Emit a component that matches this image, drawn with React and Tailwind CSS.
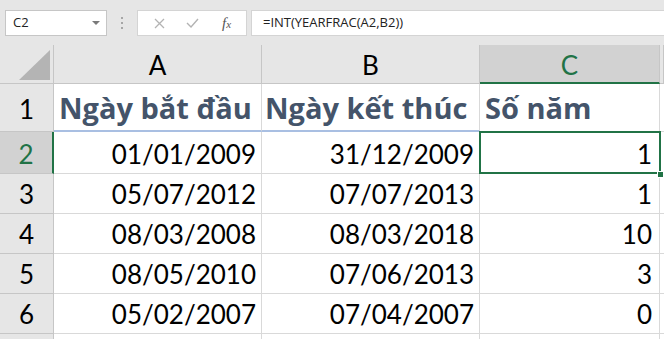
import React from "react";

const rows = [
  ["2", "01/01/2009", "31/12/2009", "1", "h-[42px]"],
  ["3", "05/07/2012", "07/07/2013", "1", "h-[40px]"],
  ["4", "08/03/2008", "08/03/2018", "10", "h-[40px]"],
  ["5", "08/05/2010", "07/06/2013", "3", "h-[40px]"],
  ["6", "05/02/2007", "07/04/2007", "0", "h-[40px]"],
  ["", "", "", "", "h-[40px]"],
];

function FormulaBar() {
  return (
    <div className="h-[45px] bg-[#e6e6e6] flex items-start pt-[10px] font-['Open_Sans',sans-serif] text-[13px]">
      {/* Name box */}
      <div className="ml-[5px] w-[102px] h-[26px] bg-white border border-[#c6c6c6] flex items-center justify-between pl-[7px] pr-[6px] text-[#222]">
        <span>C2</span>
        <svg width="8" height="5" viewBox="0 0 8 5">
          <path d="M0 0 L8 0 L4 4 Z" fill="#7a7a7a" />
        </svg>
      </div>

      {/* splitter dots */}
      <div className="w-[30px] h-[26px] flex flex-col items-center justify-center gap-[3px]">
        <span className="w-[2px] h-[2px] bg-[#a6a6a6]" />
        <span className="w-[2px] h-[2px] bg-[#a6a6a6]" />
        <span className="w-[2px] h-[2px] bg-[#a6a6a6]" />
      </div>

      {/* cancel / enter / fx */}
      <div className="w-[110px] h-[26px] bg-white border border-[#d4d4d4] flex items-center pl-[16px]">
        <svg width="11" height="11" viewBox="0 0 11 11">
          <path d="M1 1 L10 10 M10 1 L1 10" stroke="#b3b3b3" strokeWidth="1.3" />
        </svg>
        <svg className="ml-[21px]" width="13" height="10" viewBox="0 0 13 10">
          <path d="M1 5 L5 9 L12 1" stroke="#b3b3b3" strokeWidth="1.4" fill="none" />
        </svg>
        <span className="ml-[23px] font-['Liberation_Serif',serif] italic text-[#555] text-[15px] leading-none">
          f<span className="text-[11px]">x</span>
        </span>
      </div>

      {/* formula input */}
      <div className="ml-[4px] flex-1 h-[26px] bg-white border-t border-b border-l border-[#d4d4d4] flex items-center pl-[11px] text-[#222]">
        =INT(YEARFRAC(A2,B2))
      </div>
    </div>
  );
}

export default function App() {
  const head = "bg-[#e6e6e6] border-r border-b border-[#c6c6c6] flex items-end justify-center pb-[5px] leading-none";
  const cell = "bg-white border-r border-b border-[#d9d9d9] flex items-end justify-end pr-[5px] pb-[6px] leading-none";
  const title = "font-['Open_Sans',sans-serif] font-bold text-[29px] text-[#44546a] whitespace-nowrap";
  return (
    <div className="w-[664px] h-[339px] overflow-hidden bg-white font-['Lato',sans-serif] text-[26px] text-black">
      <FormulaBar />

      {/* column header row */}
      <div className="flex h-[39px]">
        <div className="w-[54px] shrink-0 bg-[#e6e6e6] border-r border-b border-[#c6c6c6] flex items-end justify-end pr-[3px] pb-[3px]">
          <svg width="31" height="30" viewBox="0 0 31 30">
            <path d="M31 0 L31 30 L0 30 Z" fill="#b4b4b4" />
          </svg>
        </div>
        <div className={`w-[208px] shrink-0 ${head}`}>A</div>
        <div className={`w-[218px] shrink-0 ${head}`}>B</div>
        <div className="w-[180px] shrink-0 bg-[#d2d2d2] border-r border-[#c6c6c6] border-b-2 border-b-[#217346] flex items-end justify-center pb-[4px] leading-none text-[#217346]">
          C
        </div>
        <div className={`flex-1 ${head}`} />
      </div>

      {/* row 1 - titles */}
      <div className="flex h-[48px]">
        <div className={`w-[54px] shrink-0 ${head} pb-[9px]`}>1</div>
        <div className={`w-[208px] shrink-0 bg-white border-r border-[#d9d9d9] border-b-2 border-b-[#a9bfe2] flex items-end pl-[5px] pb-[8px] leading-none ${title}`}>
          Ngày bắt đầu
        </div>
        <div className={`w-[218px] shrink-0 bg-white border-r border-[#d9d9d9] border-b-2 border-b-[#a9bfe2] flex items-end pl-[3px] pb-[8px] leading-none ${title}`}>
          Ngày kết thúc
        </div>
        <div className={`w-[180px] shrink-0 bg-white border-r border-b border-[#d9d9d9] flex items-end pl-[5px] pb-[9px] leading-none ${title}`}>
          Số năm
        </div>
        <div className="flex-1 bg-white border-b border-[#d9d9d9]" />
      </div>

      {/* data rows */}
      {rows.map(([n, a, b, c, h], i) => {
        const sel = i === 0;
        return (
          <div key={i} className={`flex ${h}`}>
            <div
              className={
                sel
                  ? "w-[54px] shrink-0 bg-[#d2d2d2] border-b border-[#c6c6c6] border-r-2 border-r-[#217346] flex items-end justify-center pb-[6px] leading-none text-[#217346]"
                  : `w-[54px] shrink-0 ${head} pb-[6px]`
              }
            >
              {n}
            </div>
            <div className={`w-[208px] shrink-0 ${cell}`}>{a}</div>
            <div className={`w-[218px] shrink-0 ${cell}`}>{b}</div>
            <div className={`relative w-[180px] shrink-0 ${cell} pr-[7px]`}>
              {c}
              {sel && (
                <>
                  <div className="absolute z-10 -left-px -top-px w-[182px] h-[43px] border-2 border-[#217346]" />
                  <div className="absolute z-20 -right-[5px] -bottom-[5px] w-[7px] h-[7px] bg-[#217346] border border-white" />
                </>
              )}
            </div>
            <div className="flex-1 bg-white border-b border-[#d9d9d9]" />
          </div>
        );
      })}
    </div>
  );
}
